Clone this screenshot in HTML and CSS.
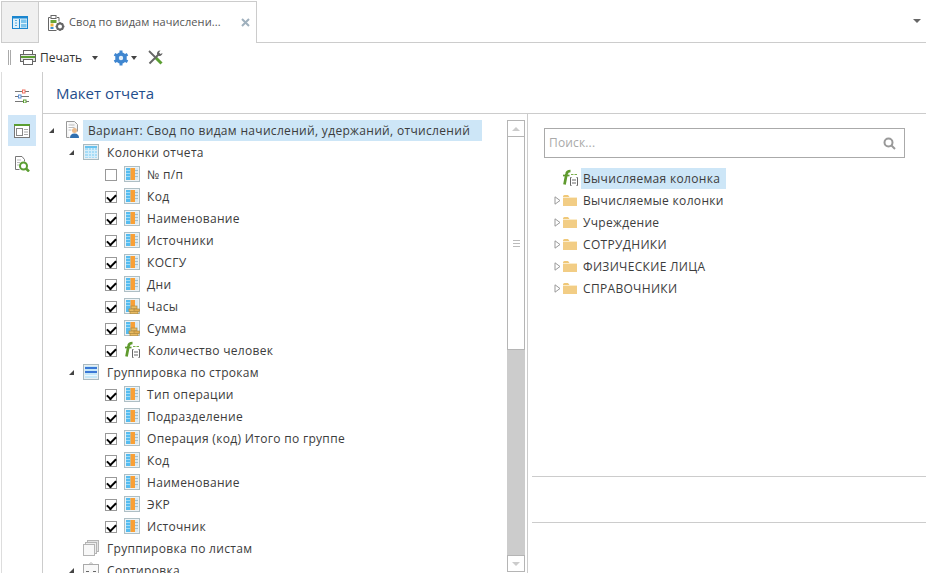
FILE: index.html
```html
<!DOCTYPE html>
<html lang="ru">
<head>
<meta charset="utf-8">
<title>Свод по видам начислений</title>
<link rel="stylesheet" href="styles.css">
</head>
<body>
<svg class="defs" width="0" height="0" aria-hidden="true">
  <symbol id="col" viewBox="0 0 16 16">
    <rect x=".5" y=".5" width="15" height="15" fill="#eef3f5" stroke="#aebfc5"/>
    <rect x="2" y="2" width="12" height="12" fill="#d9e9f1"/>
    <rect x="2" y="2" width="4.500" height="12" fill="#55bcf0"/>
    <path d="M2 4.500h4.500M2 7.500h4.500M2 10.500h4.500" stroke="#9edcf9"/>
    <rect x="6.500" y="2" width="4.500" height="12" fill="#f9a036"/>
    <path d="M11 4.500h3M11 7.500h3M11 10.500h3" stroke="#a3bfcc"/>
  </symbol>
  <symbol id="coin" viewBox="0 0 16 16">
    <rect x=".5" y=".5" width="15" height="15" fill="#eef3f5" stroke="#aebfc5"/>
    <rect x="2" y="2" width="12" height="12" fill="#d9e9f1"/>
    <rect x="2" y="2" width="4.500" height="12" fill="#55bcf0"/>
    <path d="M2 4.500h4.500M2 7.500h4.500" stroke="#9edcf9"/>
    <rect x="6.500" y="2" width="4.500" height="8" fill="#f9a036"/>
    <rect x="7" y="8" width="6" height="3" fill="#eabb63" stroke="#b08a3e" stroke-width=".7"/>
    <rect x="5" y="11" width="6" height="2.500" fill="#eabb63" stroke="#b08a3e" stroke-width=".7"/>
    <rect x="10" y="11" width="5.500" height="2.500" fill="#e3ad50" stroke="#b08a3e" stroke-width=".7"/>
    <rect x="6" y="13.500" width="8" height="2.300" fill="#eabb63" stroke="#b08a3e" stroke-width=".7"/>
  </symbol>
  <symbol id="func" viewBox="0 0 18 18">
    <path d="M2.500 15.500 4.500 5Q5 2 8.500 2" fill="none" stroke="#5f9a2e" stroke-width="2.700"/>
    <path d="M1 6.500h6.500" stroke="#5f9a2e" stroke-width="1.700"/>
    <path d="M9 5.500h2.500M12.500 5.500H15" stroke="#7aae4a" stroke-width="1.200"/>
    <path d="M9.500 8.500h-1v8h1M14.500 8.500h1v8h-1" fill="none" stroke="#666"/>
    <path d="M10 11h4M10 14h4" stroke="#666"/>
  </symbol>
  <symbol id="grid" viewBox="0 0 16 16">
    <rect x=".5" y=".5" width="15" height="15" fill="#e8eef1" stroke="#a9bac0"/>
    <rect x="2" y="2" width="12" height="12" fill="#a6dcf7"/>
    <rect x="2" y="2" width="12" height="2" fill="#68c2ef"/>
    <path d="M2 6.500h12M2 9.500h12M2 12.500h12M5.500 4v10M8.500 4v10M11.500 4v10" stroke="#d4eefb"/>
  </symbol>
  <symbol id="rows" viewBox="0 0 16 16">
    <rect x=".5" y=".5" width="15" height="15" fill="#e8eef1" stroke="#a9bac0"/>
    <rect x="2" y="2" width="12" height="12" fill="#c4e7f8"/>
    <rect x="2" y="3" width="12" height="2" fill="#3a78d6"/>
    <rect x="2" y="7" width="12" height="2" fill="#3a78d6"/>
    <path d="M2 11.500h12" stroke="#eaf7fd"/>
  </symbol>
  <symbol id="folder" viewBox="0 0 14 11">
    <path d="M0 1.500Q0 0 1.500 0H5l1.500 2H14v9H0z" fill="#f0c878"/>
    <rect x="0" y="3" width="14" height="8" fill="#f2cd85"/>
    <path d="M0 2.500h14" stroke="#fbeccb"/>
  </symbol>
  <symbol id="twist" viewBox="0 0 7 9">
    <path d="M1 .8 6 4.500 1 8.200z" fill="#fff" stroke="#999"/>
  </symbol>
</svg>

<header class="tabbar">
  <div class="home">
    <svg width="16" height="13" viewBox="0 0 16 13"><rect x=".5" y=".5" width="15" height="12" fill="#dff1fb" stroke="#1b86cf"/><rect x="1" y="1" width="14" height="1.500" fill="#1b86cf"/><rect x="7" y="3" width="1" height="9" fill="#1b86cf"/><rect x="9" y="3.500" width="5.500" height="3.500" fill="#7cc4ec"/><rect x="9" y="8" width="5.500" height="3.500" fill="#7cc4ec"/><path d="M3 4.500h2M3 7h2M3 9.500h2" stroke="#5aaee0"/></svg>
  </div>
  <div class="tab">
    <svg class="tab-ico" width="18" height="18" viewBox="0 0 18 18"><path d="M3.500 3.500h-2v13h8M10 3.500h2v4" fill="none" stroke="#666"/><rect x="4" y="1.500" width="5" height="3" fill="#fff" stroke="#666"/><rect x="3.500" y="6" width="6" height="3" fill="#6aa336"/><rect x="3.500" y="9.500" width="3" height="3" fill="#f2b33d"/><rect x="3.500" y="13" width="3" height="2" fill="#3d8fd1"/><circle cx="13" cy="12.500" r="3" fill="none" stroke="#666" stroke-width="2"/><path d="M13 8v1.500M13 15.500V17M8.500 12.500H10M16 12.500h1.500M10 9.500l1 1M15 14.500l1 1M16 9.500l-1 1M11 14.500l-1 1" stroke="#666" stroke-width="1.500"/></svg>
    <span class="tab-label">Свод по видам начислени...</span>
    <svg class="tab-close" width="9" height="9" viewBox="0 0 9 9"><path d="M1 1l7 7M8 1L1 8" stroke="#9fb0bd" stroke-width="2"/></svg>
  </div>
  <div class="tab-rest"><i class="tri tri-dark"></i></div>
</header>

<div class="toolbar">
  <i class="grip"></i>
  <svg class="print-ico" width="16" height="15" viewBox="0 0 16 15"><rect x="3.500" y=".5" width="9" height="4" fill="#fff" stroke="#666"/><rect x=".5" y="4.500" width="15" height="7" fill="#e6e6e6" stroke="#666"/><rect x="1" y="6" width="14" height="2" fill="#5b9e32"/><rect x="3.500" y="9.500" width="9" height="5" fill="#fff" stroke="#666"/></svg>
  <span class="print-label">Печать</span>
  <i class="tri tri-print"></i>
  <svg class="gear-ico" width="16" height="16" viewBox="0 0 16 16"><circle cx="8" cy="8" r="4" fill="#e4eff9" stroke="#3f86d0" stroke-width="3.600"/><path d="M8 .5v3M8 12.500v3M1.500 4.250l2.600 1.500M11.900 10.250l2.600 1.500M14.500 4.250l-2.600 1.500M4.100 10.250l-2.600 1.500" stroke="#3f86d0" stroke-width="3"/></svg>
  <i class="tri tri-gear"></i>
  <svg class="tools-ico" width="15" height="15" viewBox="0 0 15 15"><path d="M1 1l6 6" stroke="#666" stroke-width="1.800"/><path d="M7 7l6.500 6.500" stroke="#5b9e32" stroke-width="3"/><path d="M1.500 13.500 10 5" stroke="#666" stroke-width="2"/><path d="M14.500 3a3.200 3.200 0 0 1-4.500 2.800L9.200 5A3.200 3.200 0 0 1 12.500.5L11 2.500l1.500 1.500z" fill="#666"/></svg>
</div>

<main class="main">
  <nav class="rail">
    <div class="rail-btn">
      <svg class="nudge" width="16" height="14" viewBox="0 0 16 14"><path d="M1 2.500h7M11 2.500h4M1 7.500h3M7 7.500h8M1 12.500h8M12 12.500h3" stroke="#777"/><rect x="8.500" y="1" width="2.500" height="3" fill="#fff" stroke="#ef6f5f"/><rect x="4.500" y="6" width="2.500" height="3" fill="#fff" stroke="#5b8fd6"/><rect x="9.500" y="11" width="2.500" height="3" fill="#fff" stroke="#5b9e32"/></svg>
    </div>
    <div class="rail-btn rail-on">
      <svg width="16" height="14" viewBox="0 0 16 14"><rect x=".5" y=".5" width="15" height="13" fill="#fff" stroke="#777"/><rect x="0" y="0" width="16" height="2" fill="#5b9e32"/><rect x="2.500" y="4.500" width="6" height="7" fill="#fff" stroke="#888"/><path d="M10 5.500h4M10 8h4M10 10.500h4" stroke="#aaa"/></svg>
    </div>
    <div class="rail-btn">
      <svg class="nudge" width="16" height="16" viewBox="0 0 16 16"><path d="M8 .5H1.500v13h4M8 .5l2.500 3v2" fill="none" stroke="#777"/><path d="M3 4h4M3 6.500h3M3 9h2" stroke="#bbb"/><circle cx="9.500" cy="10" r="3.500" fill="#fff" stroke="#5b9e32" stroke-width="2"/><path d="M12 12.500l3 3" stroke="#5b9e32" stroke-width="2.500"/></svg>
    </div>
  </nav>
  <section class="content">
    <h1 class="title">Макет отчета</h1>
    <div class="panels">
      <div class="left">
        <div class="tree">
          <div class="row l0"><i class="arrow"></i>
            <svg class="ico" width="16" height="18" viewBox="0 0 16 18"><path d="M1.500 .5h8l3 3v7M1.500 .5v16h3" fill="#f5f5f5" stroke="#999"/><path d="M3.500 4h6M3.500 6.500h6M3.500 9h3" stroke="#bbb"/><circle cx="9.500" cy="9.500" r="2.500" fill="#e9b98a"/><path d="M5 17q0-4.500 4.500-4.500t4.500 4.500z" fill="#2f6fb0"/></svg>
            <span class="sel root-label">Вариант: Свод по видам начислений, удержаний, отчислений</span></div>
          <div class="row l1"><i class="arrow"></i><svg class="ico" width="16" height="16"><use href="#grid"/></svg><span class="t">Колонки отчета</span></div>
          <div class="row l2"><i class="cb"></i><svg class="ico" width="16" height="16"><use href="#col"/></svg><span class="t">№ п/п</span></div>
          <div class="row l2"><i class="cb on"></i><svg class="ico" width="16" height="16"><use href="#col"/></svg><span class="t">Код</span></div>
          <div class="row l2"><i class="cb on"></i><svg class="ico" width="16" height="16"><use href="#col"/></svg><span class="t">Наименование</span></div>
          <div class="row l2"><i class="cb on"></i><svg class="ico" width="16" height="16"><use href="#col"/></svg><span class="t">Источники</span></div>
          <div class="row l2"><i class="cb on"></i><svg class="ico" width="16" height="16"><use href="#col"/></svg><span class="t">КОСГУ</span></div>
          <div class="row l2"><i class="cb on"></i><svg class="ico" width="16" height="16"><use href="#col"/></svg><span class="t">Дни</span></div>
          <div class="row l2"><i class="cb on"></i><svg class="ico" width="16" height="16"><use href="#coin"/></svg><span class="t">Часы</span></div>
          <div class="row l2"><i class="cb on"></i><svg class="ico" width="16" height="16"><use href="#coin"/></svg><span class="t">Сумма</span></div>
          <div class="row l2"><i class="cb on"></i><svg class="ico" width="18" height="18"><use href="#func"/></svg><span class="t tf">Количество человек</span></div>
          <div class="row l1"><i class="arrow"></i><svg class="ico" width="16" height="16"><use href="#rows"/></svg><span class="t">Группировка по строкам</span></div>
          <div class="row l2"><i class="cb on"></i><svg class="ico" width="16" height="16"><use href="#col"/></svg><span class="t">Тип операции</span></div>
          <div class="row l2"><i class="cb on"></i><svg class="ico" width="16" height="16"><use href="#col"/></svg><span class="t">Подразделение</span></div>
          <div class="row l2"><i class="cb on"></i><svg class="ico" width="16" height="16"><use href="#col"/></svg><span class="t">Операция (код) Итого по группе</span></div>
          <div class="row l2"><i class="cb on"></i><svg class="ico" width="16" height="16"><use href="#col"/></svg><span class="t">Код</span></div>
          <div class="row l2"><i class="cb on"></i><svg class="ico" width="16" height="16"><use href="#col"/></svg><span class="t">Наименование</span></div>
          <div class="row l2"><i class="cb on"></i><svg class="ico" width="16" height="16"><use href="#col"/></svg><span class="t">ЭКР</span></div>
          <div class="row l2"><i class="cb on"></i><svg class="ico" width="16" height="16"><use href="#col"/></svg><span class="t">Источник</span></div>
          <div class="row l1"><i class="arrow arrow-none"></i>
            <svg class="ico" width="16" height="16" viewBox="0 0 16 16"><rect x="4.500" y=".5" width="11" height="11" fill="#e4e4e4" stroke="#b5b5b5"/><rect x="2.500" y="2.500" width="11" height="11" fill="#eee" stroke="#b5b5b5"/><rect x=".5" y="4.500" width="11" height="11" fill="#f8f8f8" stroke="#b5b5b5"/></svg>
            <span class="t">Группировка по листам</span></div>
          <div class="row l1"><i class="arrow"></i>
            <svg class="ico" width="16" height="16" viewBox="0 0 16 16"><rect x=".5" y="2.500" width="15" height="13" fill="#f8f8f8" stroke="#aaa"/><path d="M6 2.500l2-2 2 2" fill="none" stroke="#aaa"/><path d="M3 9.500h3M10 9.500h3M3 12h3M10 12h3" stroke="#666"/></svg>
            <span class="t">Сортировка</span></div>
        </div>
        <div class="scroll">
          <div class="sb-btn"><i class="tri tri-up"></i></div>
          <div class="sb-thumb"><i class="sb-grip"></i></div>
          <div class="sb-track"></div>
          <div class="sb-btn"><i class="tri tri-down"></i></div>
        </div>
      </div>
      <div class="right">
        <div class="search"><span class="search-ph">Поиск...</span>
          <svg width="13" height="13" viewBox="0 0 13 13"><circle cx="5.500" cy="5.500" r="4" fill="none" stroke="#999" stroke-width="2"/><path d="M8.500 8.500l3.500 3.500" stroke="#999" stroke-width="2"/></svg>
        </div>
        <div class="rtree">
          <div class="rrow"><svg class="open open-none" width="7" height="9"><use href="#twist"/></svg><svg class="fn" width="18" height="18"><use href="#func"/></svg><span class="sel rsel">Вычисляемая колонка</span></div>
          <div class="rrow"><svg class="open" width="7" height="9"><use href="#twist"/></svg><svg class="fld" width="14" height="11"><use href="#folder"/></svg><span class="rt">Вычисляемые колонки</span></div>
          <div class="rrow"><svg class="open" width="7" height="9"><use href="#twist"/></svg><svg class="fld" width="14" height="11"><use href="#folder"/></svg><span class="rt">Учреждение</span></div>
          <div class="rrow"><svg class="open" width="7" height="9"><use href="#twist"/></svg><svg class="fld" width="14" height="11"><use href="#folder"/></svg><span class="rt">СОТРУДНИКИ</span></div>
          <div class="rrow"><svg class="open" width="7" height="9"><use href="#twist"/></svg><svg class="fld" width="14" height="11"><use href="#folder"/></svg><span class="rt">ФИЗИЧЕСКИЕ ЛИЦА</span></div>
          <div class="rrow"><svg class="open" width="7" height="9"><use href="#twist"/></svg><svg class="fld" width="14" height="11"><use href="#folder"/></svg><span class="rt">СПРАВОЧНИКИ</span></div>
        </div>
        <div class="right-foot">
          <div class="foot-a"></div>
          <div class="foot-b"></div>
        </div>
      </div>
    </div>
  </section>
</main>
</body>
</html>
```
FILE: styles.css
```css
* { box-sizing: border-box; }
html, body { height: 100%; }
body {
  margin: 0;
  background: #fff;
  font-family: "Open Sans", "Noto Sans", sans-serif;
  font-size: 12px;
  color: #3c3c3c;
  overflow: hidden;
  display: flex;
  flex-direction: column;
}
.defs { position: absolute; }
i { display: block; flex: none; }
svg { display: block; flex: none; }

.tabbar { display: flex; height: 43px; flex: none; }
.home {
  width: 37px;
  margin-left: 1px;
  margin-top: 1px;
  background: #f0f0f0;
  border-bottom: 1px solid #ccc;
  border-top: 1px solid #ccc;
  border-left: 1px solid #ccc;
  display: flex;
  align-items: center;
  justify-content: center;
}
.tab {
  width: 219px;
  margin-top: 1px;
  border: 1px solid #ccc;
  border-bottom: 0;
  display: flex;
  align-items: center;
  padding-left: 8px;
}
.tab-label { margin-left: 4px; width: 164px; white-space: nowrap; color: #555; font-size: 11px; letter-spacing: .1px; padding-bottom: 2px; }
.tab-close { margin-left: 8px; }
.tab-rest {
  flex: 1;
  border-bottom: 1px solid #ccc;
  display: flex;
  justify-content: flex-end;
  align-items: center;
  padding-right: 5px;
}
.tri { width: 0; height: 0; border-left: 3.500px solid transparent; border-right: 3.500px solid transparent; border-top: 4px solid #555; }
.tri-dark { border-left-width: 4px; border-right-width: 4px; border-top-color: #666; }

.toolbar { display: flex; align-items: center; height: 29px; flex: none; padding-left: 8px; }
.grip { width: 3px; height: 15px; border-left: 1px solid #aaa; border-right: 1px solid #aaa; }
.print-ico { margin-left: 9px; }
.print-label { margin-left: 4px; width: 52px; color: #333; }
.tri-print { border-left-width: 3px; border-right-width: 3px; border-top-color: #444; }
.gear-ico { margin-left: 15px; }
.tri-gear { margin-left: 2px; border-left-width: 3px; border-right-width: 3px; border-top-color: #444; }
.tools-ico { margin-left: 11px; }

.main { flex: 1; min-height: 0; display: flex; border-left: 1px solid #ddd; margin-left: 1px; }
.rail { flex: none; border-right: 1px solid #ccc; padding-top: 9px; display: flex; flex-direction: column; gap: 3px; padding-left: 6px; width: 41px; }
.rail-btn { width: 28px; height: 31px; display: flex; align-items: center; justify-content: center; }
.rail-on { background: #cfe6f8; }
.nudge { margin-bottom: 2px; }

.content { flex: 1; min-width: 0; display: flex; flex-direction: column; }
.title {
  margin: 0;
  height: 42px;
  flex: none;
  padding: 10px 0 0 13px;
  font-size: 15px;
  line-height: 22px;
  font-weight: 400;
  color: #1f4e8c;
  border-bottom: 1px solid #ccc;
}
.panels { flex: 1; min-height: 0; display: flex; }
.left { width: 485px; flex: none; display: flex; border-right: 1px solid #ccc; padding-right: 2px; padding-top: 5px; }
.tree { flex: 1; min-width: 0; overflow: hidden; letter-spacing: .32px; }
.row { display: flex; align-items: center; height: 22px; white-space: nowrap; }
.l0 { padding-left: 6px; }
.l1 { padding-left: 26px; }
.l2 { padding-left: 62px; }
.arrow { width: 0; height: 0; border-style: solid; border-width: 0 0 5px 5px; border-color: transparent transparent #444 transparent; margin-right: 9px; }
.l0 .arrow { margin-right: 11px; }
.arrow-none { visibility: hidden; }
.l2 .ico { margin-left: 7px; }
.t { margin-left: 7px; }
.l1 .t { margin-left: 8px; }
.l2 .tf { margin-left: 6px; }
.sel { background: #cde6f7; height: 21px; line-height: 21px; }
.root-label { margin-left: 2px; padding-left: 5px; width: 399px; align-self: flex-end; }
.cb { width: 12px; height: 12px; margin-top: 2px; border: 1px solid #999; background: #fff; position: relative; }
.cb.on::after {
  content: "";
  position: absolute;
  left: 1px;
  top: 1.500px;
  width: 7px;
  height: 4px;
  border-left: 2px solid #000;
  border-bottom: 2.500px solid #000;
  transform: rotate(-45deg);
}

.scroll { width: 18px; flex: none; display: flex; flex-direction: column; margin: 1px 0 1px; }
.sb-btn { height: 17px; border: 1px solid #b5b5b5; display: flex; align-items: center; justify-content: center; flex: none; background: #fff; }
.tri-up { border-top: 0; border-bottom: 4px solid #ccc; border-left-width: 4px; border-right-width: 4px; }
.tri-down { border-top-color: #ccc; border-left-width: 4px; border-right-width: 4px; }
.sb-thumb { height: 213px; flex: none; border: 1px solid #b5b5b5; border-top: 0; display: flex; align-items: center; justify-content: center; }
.sb-grip { width: 7px; height: 7px; border-top: 1px solid #bbb; border-bottom: 1px solid #bbb; background: linear-gradient(#bbb, #bbb) center / 100% 1px no-repeat; }
.sb-track { flex: 1; background: #ccc; }

.right { flex: 1; min-width: 0; display: flex; flex-direction: column; padding-top: 14px; letter-spacing: .32px; }
.search {
  margin-left: 16px;
  width: 361px;
  height: 30px;
  flex: none;
  border: 1px solid #aaa;
  display: flex;
  align-items: center;
  justify-content: space-between;
  padding: 0 8px 0 4px;
}
.search-ph { color: #aaa; padding-bottom: 2px; letter-spacing: .15px; }
.rtree { margin-top: 9px; height: 309px; flex: none; }
.rrow { display: flex; align-items: center; height: 22px; padding-left: 26px; white-space: nowrap; }
.open { margin-right: 2px; }
.open-none { visibility: hidden; margin-right: 1px; }
.fld { margin-right: 6px; }
.fn { margin-right: 1px; }
.rsel { padding: 0 6px 0 2px; }
.right-foot { margin-left: 4px; flex: 1; }
.foot-a { height: 46px; border-top: 1px solid #ccc; }
.foot-b { border-top: 1px solid #ccc; }
```
